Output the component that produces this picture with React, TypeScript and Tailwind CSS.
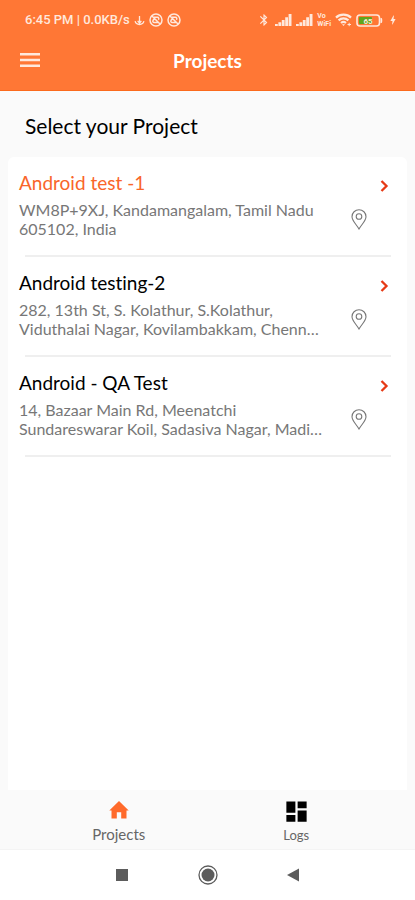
import { useState } from "react"
import { MdBluetooth, MdBolt, MdDashboard } from "react-icons/md"

const projects = [
  {
    id: 1,
    name: "Android test -1",
    address: ["WM8P+9XJ, Kandamangalam, Tamil Nadu", "605102, India"],
  },
  {
    id: 2,
    name: "Android testing-2",
    address: ["282, 13th St, S. Kolathur, S.Kolathur,", "Viduthalai Nagar, Kovilambakkam, Chenn…"],
  },
  {
    id: 3,
    name: "Android - QA Test",
    address: ["14, Bazaar Main Rd, Meenatchi", "Sundareswarar Koil, Sadasiva Nagar, Madi…"],
  },
]

function SignalIcon() {
  return (
    <svg width="17" height="12" viewBox="0 0 17 12" fill="currentColor">
      <path d="M0 10h2.800v2H0zM3.400 8.200H6.200V12H3.400zM6.800 6h2.800v6H6.800zM10.200 3.300H13V12h-2.800zM13.600 0h2.900v12h-2.900z" />
    </svg>
  )
}

function AnchorIcon() {
  return (
    <svg width="11" height="11" viewBox="0 0 12 12" fill="none" stroke="currentColor" strokeWidth="1.400">
      <path d="M6 1v8.500M4 6.500l2 2.500 2-2.500M1.200 6.800c.5 2.300 2.300 3.600 4.800 3.600s4.300-1.300 4.800-3.600" />
    </svg>
  )
}

function BlockedIcon() {
  return (
    <svg width="14" height="14" viewBox="0 0 14 14" fill="none" stroke="currentColor" strokeWidth="1.500">
      <circle cx="7" cy="7" r="6" />
      <path d="M3 3l8 8M5 4.300h3.500c1.200 0 1.800 1.600.8 2.500M9 9.600H5.300c-1.300 0-2-1.400-1.100-2.500l1-1" />
    </svg>
  )
}

function WifiIcon() {
  return (
    <svg width="17" height="14" viewBox="0 0 17 14" fill="none" stroke="currentColor" strokeWidth="2.200">
      <path d="M1 4.600c4-4 11-4 15 0M3.600 7.400c2.800-2.700 7-2.700 9.800 0M6 10c1.600-1.300 3.400-1.300 5 0" />
      <path d="M7 11.200h3L8.500 13z" fill="currentColor" stroke="none" />
      <path d="M12.500 11.500h3.500M14.200 9.800v3.400" strokeWidth="1" />
    </svg>
  )
}

function BatteryIcon() {
  return (
    <svg width="27" height="13" viewBox="0 0 27 13">
      <rect x="1" y="1" width="22.500" height="11" rx="3" fill="none" stroke="#ffe8dc" strokeWidth="1.600" />
      <path d="M24.500 4h1c1 0 1 5 0 5h-1z" fill="#ffe8dc" />
      <rect x="3" y="3" width="13" height="7" rx="1" fill="#5fa51c" />
      <text x="12" y="9.500" fontSize="8" fontWeight="700" fontFamily="Roboto, sans-serif" textAnchor="middle" fill="#ffe8dc">
        65
      </text>
    </svg>
  )
}

function PinIcon() {
  return (
    <svg width="16" height="21" viewBox="0 0 16 21" fill="none" stroke="#777" strokeWidth="1.100">
      <path d="M8 20C5.500 15.500 1 11.800 1 7.700a7 7 0 0 1 14 0C15 11.800 10.500 15.500 8 20z" />
      <circle cx="8" cy="7.500" r="2.800" />
    </svg>
  )
}

function ChevronIcon() {
  return (
    <svg width="10" height="14" viewBox="0 0 10 14" fill="none" stroke="#e63a16" strokeWidth="2.300">
      <path d="M2.500 2l5 5-5 5" />
    </svg>
  )
}

function HomeIcon() {
  return (
    <svg width="20" height="24" viewBox="0 0 20 24" fill="#ff6a2b">
      <path d="M10 3L.3 12.500h2.200V20.500h5.300v-6.200h4.400v6.200h5.300v-8h2.200z" />
    </svg>
  )
}

export default function App() {
  const [selected, setSelected] = useState(1)

  return (
    <div className="flex min-h-screen flex-col bg-[#fafafa] font-['Lato',sans-serif] text-black [font-variant-ligatures:none]">
      {/* HEADER */}
      <header className="border-b border-[#fb6a1c] bg-[#ff7735] text-white">
        <div className="flex h-10 items-center justify-between pr-4 pl-[25px] text-[#ffe8dc]">
          <div className="flex items-center gap-1 font-['Roboto',sans-serif] text-[13px] font-medium">
            <span>6:45 PM | 0.0KB/s</span>
            <AnchorIcon />
            <span className="flex gap-1">
              <BlockedIcon />
              <BlockedIcon />
            </span>
          </div>
          <div className="flex items-center gap-1">
            <MdBluetooth size={14} />
            <SignalIcon />
            <SignalIcon />
            <span className="flex flex-col font-['Roboto',sans-serif] text-[7px] leading-[8px] font-bold">
              <span>Vo</span>
              <span>WiFi</span>
            </span>
            <WifiIcon />
            <BatteryIcon />
            <MdBolt size={12} />
          </div>
        </div>
        <div className="grid h-[50px] grid-cols-[40px_1fr_40px] items-center px-5 pb-2">
          <button aria-label="Menu" className="flex h-10 items-center">
            <svg width="20" height="16" viewBox="0 0 20 16" fill="#ffe8dc">
              <path d="M0 0h20v2.500H0zM0 5.800h20v2.500H0zM0 11.500h20V14H0z" />
            </svg>
          </button>
          <h1 className="text-center text-[19px] leading-6 font-bold">Projects</h1>
        </div>
      </header>

      {/* LIST */}
      <main className="flex flex-1 flex-col px-2">
        <h2 className="px-[17px] pt-5 pb-4 text-[21px] leading-[30px]">Select your Project</h2>
        <ul className="flex-1 rounded-t-md bg-white">
          {projects.map((project) => (
            <li key={project.id}>
              <button
                onClick={() => setSelected(project.id)}
                className="flex w-full justify-between pt-3.5 pr-[18px] pb-4 pl-[11px] text-left"
              >
                <span className="block">
                  <span
                    className={
                      selected === project.id
                        ? "block text-[19px] leading-6 text-[#f9652a]"
                        : "block text-[19px] leading-6"
                    }
                  >
                    {project.name}
                  </span>
                  <span className="block pt-[5px] text-base leading-[19px] text-[#777]">
                    {project.address.map((line) => (
                      <span key={line} className="block whitespace-nowrap">
                        {line}
                      </span>
                    ))}
                  </span>
                </span>
                <span className="flex gap-3">
                  <span className="pt-[38px]">
                    <PinIcon />
                  </span>
                  <span className="pt-2">
                    <ChevronIcon />
                  </span>
                </span>
              </button>
              <div className="mt-px mr-4 ml-[17px] h-0.5 bg-[#efefef]" />
            </li>
          ))}
        </ul>
      </main>

      {/* TABS */}
      <nav className="grid h-[60px] grid-cols-2 border-b border-[#f4f4f4] px-[30px]">
        <button className="flex flex-col items-center pt-2 text-[#666]">
          <HomeIcon />
          <span className="text-[15px] leading-6">Projects</span>
        </button>
        <button className="flex flex-col items-center pt-2 text-[#666]">
          <MdDashboard size={27} color="#000" />
          <span className="text-[13px] leading-5">Logs</span>
        </button>
      </nav>

      {/* SYSTEM BUTTONS */}
      <footer className="flex h-[50px] items-center justify-center gap-[68px] bg-white text-[#5c5c5c]">
        <button aria-label="Recent apps">
          <svg width="16" height="16" viewBox="0 0 16 16" fill="currentColor">
            <rect x="2" y="2" width="12" height="12" />
          </svg>
        </button>
        <button aria-label="Home">
          <svg width="20" height="20" viewBox="0 0 20 20">
            <circle cx="10" cy="10" r="9" fill="none" stroke="currentColor" strokeWidth="1.300" />
            <circle cx="10" cy="10" r="6.500" fill="currentColor" />
          </svg>
        </button>
        <button aria-label="Back">
          <svg width="16" height="16" viewBox="0 0 16 16" fill="currentColor">
            <path d="M13 1.500v13L1 8z" />
          </svg>
        </button>
      </footer>
    </div>
  )
}
